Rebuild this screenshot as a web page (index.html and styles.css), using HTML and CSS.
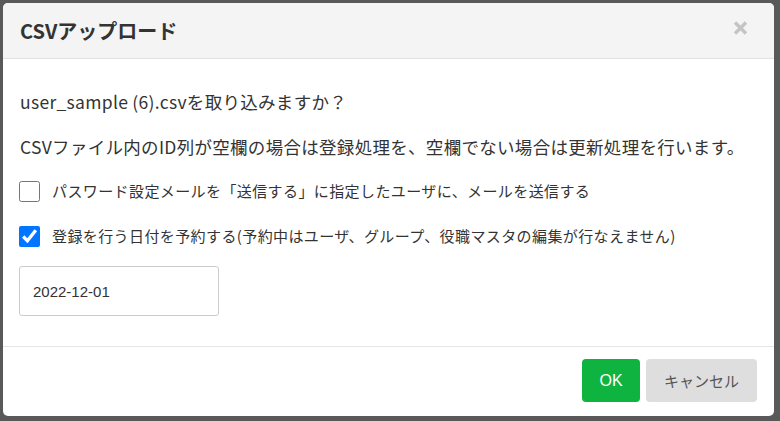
FILE: index.html
```html
<!DOCTYPE html>
<html lang="ja">
<head>
  <meta charset="UTF-8">
  <title>CSVアップロード</title>
  <link rel="stylesheet" href="styles.css">
</head>
<body>
  <div class="overlay">
    <div class="modal">
      <div class="modal-header">
        <div class="modal-title">CSVアップロード</div>
        <div class="modal-close">
          <svg width="15" height="14" viewBox="0 0 15 14">
            <path d="M2 1.5 L13 12.5 M13 1.5 L2 12.5" stroke="#c4c4c4" stroke-width="3.4"/>
          </svg>
        </div>
      </div>

      <div class="modal-body">
        <p class="message">user_sample (6).csvを取り込みますか？</p>
        <p class="message note">CSVファイル内のID列が空欄の場合は登録処理を、空欄でない場合は更新処理を行います。</p>

        <label class="check-row first">
          <input type="checkbox">
          <span>パスワード設定メールを「送信する」に指定したユーザに、メールを送信する</span>
        </label>
        <label class="check-row second">
          <input type="checkbox" checked>
          <span>登録を行う日付を予約する(予約中はユーザ、グループ、役職マスタの編集が行なえません)</span>
        </label>

        <input class="date-input" type="text" value="2022-12-01">
      </div>

      <div class="modal-footer">
        <button class="btn btn-ok">OK</button>
        <button class="btn btn-cancel">キャンセル</button>
      </div>
    </div>
  </div>
</body>
</html>
```

FILE: styles.css
```css
body {
  margin: 0;
  padding: 0;
  background-color: #595959;
  font-family: "Noto Sans CJK JP", "Noto Sans", sans-serif;
  color: #333;
}

.overlay {
  padding: 3px 6px 5px 3px;
}

.modal {
  width: 771px;
  background-color: white;
  border-radius: 5px;
  overflow: hidden;
}

.modal-header {
  height: 55px;
  background-color: #f4f4f4;
  border-bottom: 1px solid #e2e2e2;
  display: flex;
  align-items: center;
  justify-content: space-between;
  padding: 0 26px 0 17px;
}

.modal-title {
  font-size: 20px;
  font-weight: bold;
  color: #333;
  margin-top: -1px;
}

.modal-close {
  display: flex;
  margin-top: -5px;
  cursor: pointer;
}

.modal-body {
  padding: 30px 17px 30px 17px;
}

.message {
  margin: 0;
  font-size: 17.5px;
  line-height: 25px;
  letter-spacing: 0.3px;
}

.message.note {
  margin-top: 20px;
}

.check-row {
  display: flex;
  align-items: center;
  font-size: 15px;
  line-height: 22px;
  letter-spacing: 0.4px;
}

.check-row.first {
  margin-top: 21px;
}

.check-row.second {
  margin-top: 23px;
}

.check-row input {
  width: 21px;
  height: 21px;
  margin: 0 12px 0 -1px;
}

.date-input {
  display: block;
  box-sizing: border-box;
  width: 200px;
  height: 50px;
  margin: 19px 0 0 -1px;
  padding: 0 13px;
  border: 1px solid #cccccc;
  border-radius: 3px;
  font-family: "Liberation Sans", Arial, sans-serif;
  font-size: 15px;
  color: #333;
}

.modal-footer {
  border-top: 1px solid #e5e5e5;
  display: flex;
  justify-content: flex-end;
  gap: 6px;
  padding: 12px 17px 14px 0;
}

.btn {
  height: 43px;
  border: none;
  border-radius: 4px;
  font-size: 15px;
  cursor: pointer;
}

.btn-ok {
  width: 58px;
  background-color: #0fb340;
  color: white;
  font-family: "Liberation Sans", Arial, sans-serif;
  font-size: 16px;
}

.btn-cancel {
  width: 111px;
  background-color: #dedede;
  color: #555;
  font-family: "Noto Sans CJK JP", sans-serif;
}
```
